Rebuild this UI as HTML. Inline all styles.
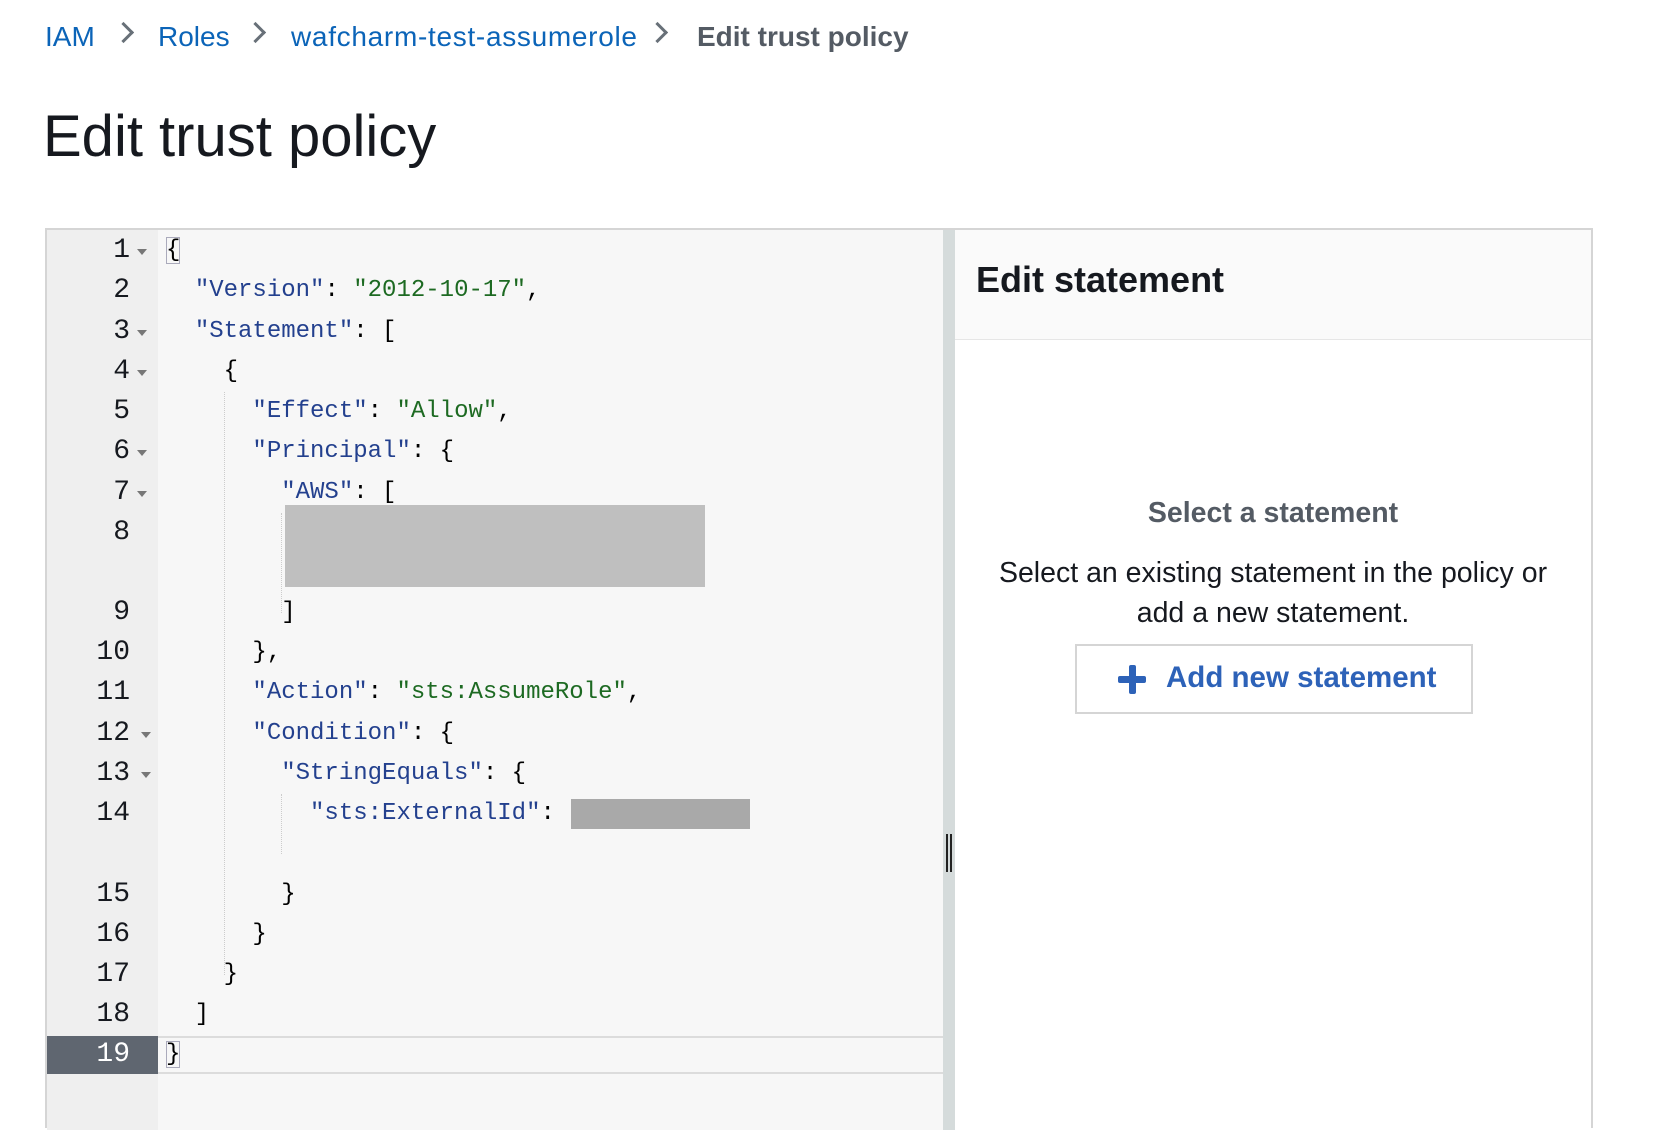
<!DOCTYPE html>
<html><head><meta charset="utf-8"><style>
*{margin:0;padding:0;box-sizing:border-box}
body{width:1654px;height:1124px;overflow:hidden;background:#fff;font-family:"Liberation Sans",Arial,sans-serif;position:relative}
.a{position:absolute;white-space:pre}
.bc{top:20px;font-size:28px;color:#0b64b8;line-height:34px}
.chev{position:absolute;top:25px;width:15px;height:15px;border-right:3px solid #687078;border-top:3px solid #687078;transform:rotate(45deg)}
.ln{position:absolute;left:45px;width:85px;text-align:right;font-family:"Liberation Mono",monospace;font-size:28px;height:40px;line-height:40px;color:#16191f}
.code{position:absolute;left:166px;font-family:"Liberation Mono",monospace;font-size:24px;height:40px;line-height:40px;color:#000;white-space:pre}
.k{color:#23408e}.s{color:#1d6a22}
.fold{position:absolute;left:137px;width:0;height:0;border-left:5px solid transparent;border-right:5px solid transparent;border-top:6px solid #777}
.guide{position:absolute;width:0;border-left:1px dotted #ccc}
</style></head><body>
<div class="a bc" style="left:45px">IAM</div>
<div class="chev" style="left:116px"></div>
<div class="a bc" style="left:158px">Roles</div>
<div class="chev" style="left:248px"></div>
<div class="a bc" style="left:291px;letter-spacing:0.7px">wafcharm-test-assumerole</div>
<div class="chev" style="left:650px"></div>
<div class="a bc" style="left:697px;color:#545b64;font-weight:bold">Edit trust policy</div>
<div class="a" style="left:43px;top:103px;font-size:58px;line-height:68px;color:#16191f">Edit trust policy</div>

<div style="position:absolute;left:45px;top:228px;width:1548px;height:900px;border:2px solid #d5d5d5;border-bottom:none"></div>
<div style="position:absolute;left:47px;top:230px;width:111px;height:900px;background:#efefef"></div>
<div style="position:absolute;left:158px;top:230px;width:785px;height:900px;background:#f7f7f7"></div>
<div style="position:absolute;left:943px;top:230px;width:12px;height:900px;background:#d5dbdb"></div>
<div style="position:absolute;left:946px;top:834px;width:2px;height:38px;background:#222"></div>
<div style="position:absolute;left:950px;top:834px;width:2px;height:38px;background:#222"></div>
<div style="position:absolute;left:955px;top:230px;width:636px;height:110px;background:#fafafa;border-bottom:1px solid #e6e6e6"></div>

<div style="position:absolute;left:47px;top:1036px;width:111px;height:38px;background:#5f6670"></div>
<div style="position:absolute;left:158px;top:1036px;width:785px;height:38px;border-top:2px solid #dcdcdc;border-bottom:2px solid #dcdcdc"></div>

<div class="guide" style="left:224px;top:392px;height:583px"></div>
<div class="guide" style="left:281px;top:513px;height:100px"></div>
<div class="guide" style="left:281px;top:794px;height:60px"></div>

<div class="ln" style="top:231px">1</div><div class="fold" style="top:249px"></div>
<div class="ln" style="top:271px">2</div>
<div class="ln" style="top:312px">3</div><div class="fold" style="top:330px"></div>
<div class="ln" style="top:352px">4</div><div class="fold" style="top:370px"></div>
<div class="ln" style="top:392px">5</div>
<div class="ln" style="top:432px">6</div><div class="fold" style="top:450px"></div>
<div class="ln" style="top:473px">7</div><div class="fold" style="top:491px"></div>
<div class="ln" style="top:513px">8</div>
<div class="ln" style="top:593px">9</div>
<div class="ln" style="top:633px">10</div>
<div class="ln" style="top:673px">11</div>
<div class="ln" style="top:714px">12</div><div class="fold" style="top:732px;left:141px"></div>
<div class="ln" style="top:754px">13</div><div class="fold" style="top:772px;left:141px"></div>
<div class="ln" style="top:794px">14</div>
<div class="ln" style="top:875px">15</div>
<div class="ln" style="top:915px">16</div>
<div class="ln" style="top:955px">17</div>
<div class="ln" style="top:995px">18</div>
<div class="ln" style="top:1035px;color:#fff">19</div>

<div class="code" style="top:231px"><span style="outline:1px solid #aab;outline-offset:-1px">{</span></div>
<div class="code" style="top:271px">  <span class="k">"Version"</span>: <span class="s">"2012-10-17"</span>,</div>
<div class="code" style="top:312px">  <span class="k">"Statement"</span>: [</div>
<div class="code" style="top:352px">    {</div>
<div class="code" style="top:392px">      <span class="k">"Effect"</span>: <span class="s">"Allow"</span>,</div>
<div class="code" style="top:432px">      <span class="k">"Principal"</span>: {</div>
<div class="code" style="top:473px">        <span class="k">"AWS"</span>: [</div>
<div style="position:absolute;left:285px;top:505px;width:420px;height:82px;background:#bfbfbf"></div>
<div class="code" style="top:593px">        ]</div>
<div class="code" style="top:633px">      },</div>
<div class="code" style="top:673px">      <span class="k">"Action"</span>: <span class="s">"sts:AssumeRole"</span>,</div>
<div class="code" style="top:714px">      <span class="k">"Condition"</span>: {</div>
<div class="code" style="top:754px">        <span class="k">"StringEquals"</span>: {</div>
<div class="code" style="top:794px">          <span class="k">"sts:ExternalId"</span>:</div>
<div style="position:absolute;left:571px;top:799px;width:179px;height:30px;background:#a9a9a9"></div>
<div class="code" style="top:875px">        }</div>
<div class="code" style="top:915px">      }</div>
<div class="code" style="top:955px">    }</div>
<div class="code" style="top:995px">  ]</div>
<div class="code" style="top:1035px"><span style="outline:1px solid #aab;outline-offset:-1px">}</span></div>

<div class="a" style="left:976px;top:259px;font-size:36px;font-weight:bold;color:#16191f;line-height:42px">Edit statement</div>
<div class="a" style="left:953px;width:640px;text-align:center;top:496px;font-size:28.5px;font-weight:bold;color:#545b64;line-height:34px">Select a statement</div>
<div class="a" style="left:953px;width:640px;text-align:center;top:553px;font-size:28.5px;color:#16191f;line-height:40px;white-space:normal">Select an existing statement in the policy or<br>add a new statement.</div>
<div style="position:absolute;left:1075px;top:644px;width:398px;height:70px;border:2px solid #d5d5d5;background:#fff"></div>
<div style="position:absolute;left:1118px;top:676px;width:28px;height:7px;background:#2d62b8;border-radius:2px"></div>
<div style="position:absolute;left:1129px;top:665px;width:7px;height:29px;background:#2d62b8;border-radius:2px"></div>
<div class="a" style="left:1166px;top:660px;font-size:29.5px;font-weight:bold;color:#2d62b8;line-height:36px">Add new statement</div>
</body></html>
